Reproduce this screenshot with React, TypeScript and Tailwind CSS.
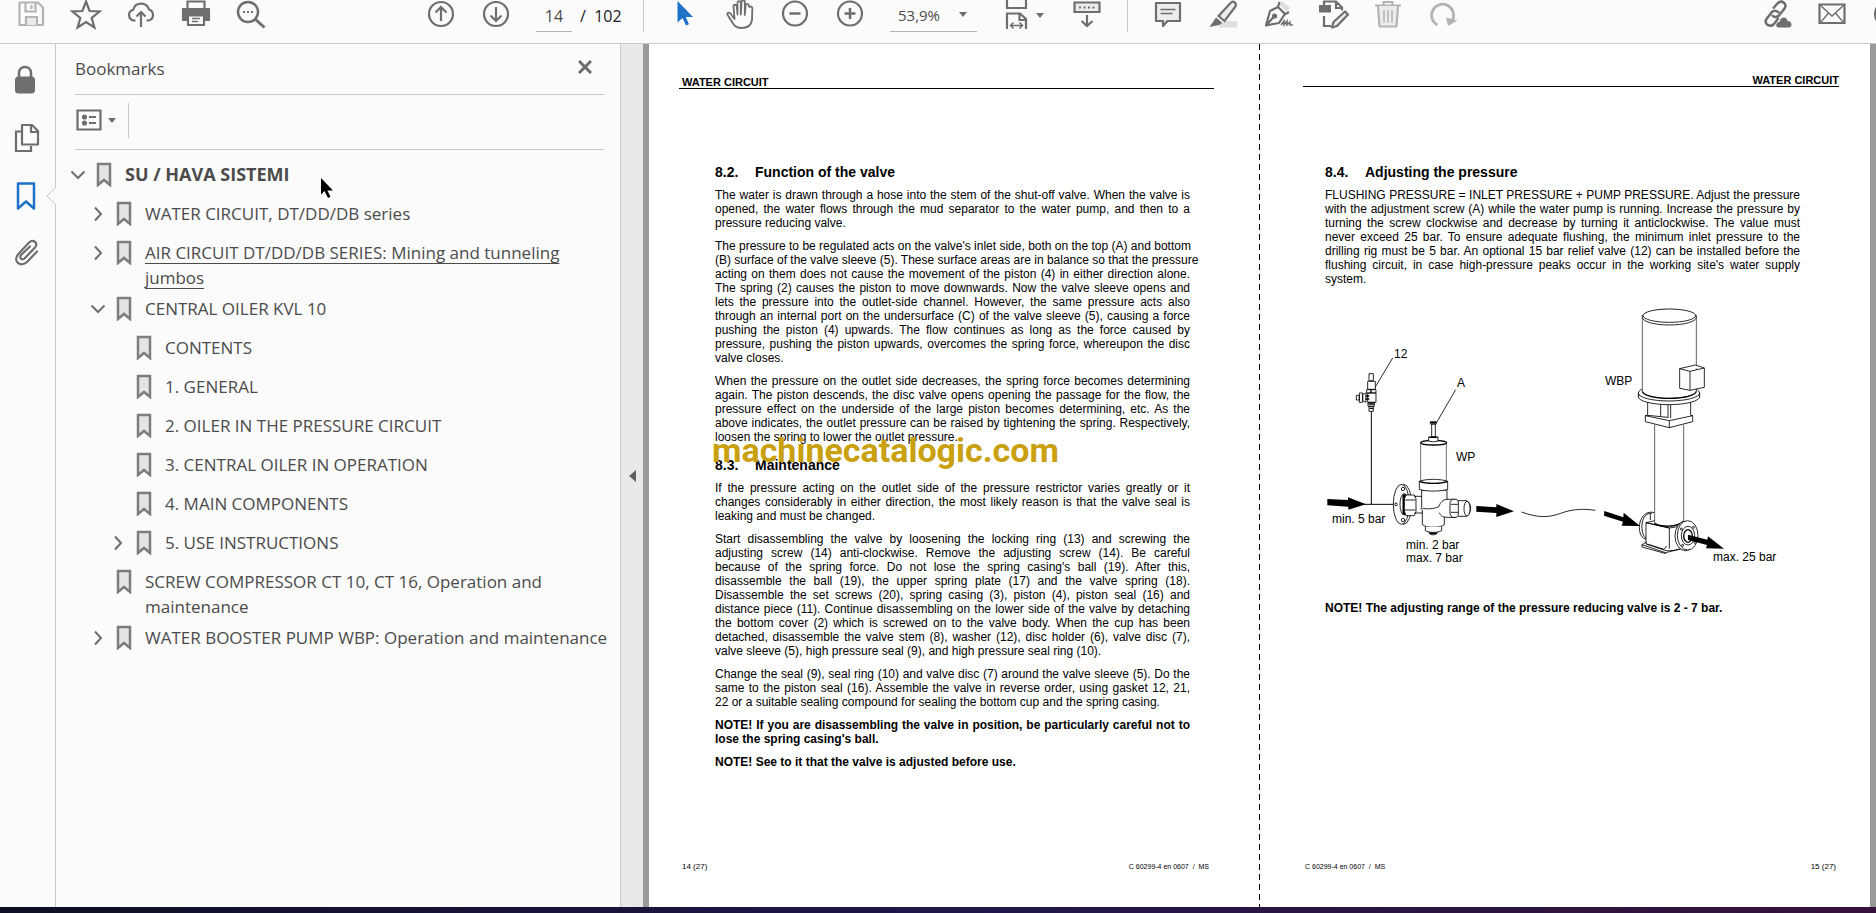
import type { ReactNode } from "react";

type IconProps = { children: ReactNode; tone?: string };

function ToolIcon({ children, tone = "text-[#6e6e6e]" }: IconProps) {
  return (
    <svg
      viewBox="0 0 28 30"
      className={`h-[30px] w-7 overflow-visible ${tone}`}
      fill="none"
      stroke="currentColor"
      strokeWidth="2.200"
      aria-hidden="true"
    >
      {children}
    </svg>
  );
}

const TOOLS: Record<string, ReactNode> = {
  save: (
    <>
      <path d="M2.500 2.500h18.500l5 5v17.500h-23.500z" strokeLinejoin="round" />
      <path d="M8.500 2.500v9h10v-9" />
      <path d="M9 25v-8h11v8" fill="#ececec" />
      <path d="M14.500 5v4" />
    </>
  ),
  star: <path d="M14 1.500 17.600 11l10 .5-7.900 6.500 2.700 9.500L14 22l-8.400 5.500 2.700-9.500-7.900-6.500 10-.5z" />,
  upload: (
    <>
      <path d="M8.500 20.500H7a5.500 5.500 0 0 1-.8-10.800A8.200 8.200 0 0 1 22 9.500a5.700 5.700 0 0 1-.5 11h-2" />
      <path d="M14 27V12.500M9.500 16.500 14 12l4.500 4.500" />
    </>
  ),
  print: (
    <>
      <path d="M5.500 9V1.500h17V9" />
      <path d="M1 9h26v11h-5v-4H6v4H1z" fill="currentColor" strokeLinejoin="round" />
      <path d="M6 15.500h16V25H6z" fill="#fbfbfb" />
      <path d="M10 18.500h8M10 21.500h6" strokeWidth="1.500" />
    </>
  ),
  find: (
    <>
      <circle cx="11" cy="12" r="10" strokeWidth="2.500" />
      <path d="m18.500 19.500 9 8" strokeWidth="3" />
      <path d="M6 12h2M10 12h2M14 12h2" />
    </>
  ),
  up: (
    <>
      <circle cx="14" cy="14" r="12" />
      <path d="M14 21V8M8.500 12.500 14 7l5.500 5.500" />
    </>
  ),
  down: (
    <>
      <circle cx="14" cy="14" r="12" />
      <path d="M14 7v13M8.500 15.500 14 21l5.500-5.500" />
    </>
  ),
  select: <path d="M6.500 1v21.500l5-4.500 3.500 7.500 3-1.300-3.300-7.200H22z" fill="currentColor" stroke="none" />,
  hand: (
    <path
      d="M8.500 19 7.500 6.500c0-2.300 3-2.300 3.300 0l.7 8V3c0-2.500 3.300-2.500 3.300 0v11.500L15.500 2c0-2.300 3.300-2.300 3.300 0v13l.8-9.500c.2-2.300 3.200-2 3.200.3l.7 1.200c.2-1 3 -.5 2.800 1.500L26 20c-.8 5.500-4.500 8-10.500 8-5 0-7-2-8.500-4.500L1.500 14.800c-.9-2 1.500-3 3-1.300z"
      strokeWidth="1.800"
      strokeLinejoin="round"
    />
  ),
  minus: (
    <>
      <circle cx="14" cy="13.500" r="12" />
      <path d="M8.500 13.500h11" strokeWidth="2.500" />
    </>
  ),
  plus: (
    <>
      <circle cx="14" cy="13.500" r="12" />
      <path d="M8.500 13.500h11M14 8v11" strokeWidth="2.500" />
    </>
  ),
  fit: (
    <>
      <path d="M5 0v8h19V0" />
      <path d="M5 29V13.500h13l6 5.500v10" />
      <path d="M17.500 14v6h6" />
      <path d="M9 25.500h11M11.500 22.500l-3 3 3 3M17.500 22.500l3 3-3 3" strokeWidth="1.500" />
    </>
  ),
  keyboard: (
    <>
      <path d="M1.500 2.500h25v9.500h-25z" fill="#ececec" />
      <path d="M6 7.500h2M10.500 7.500h2M15 7.500h2M19.500 7.500h2" strokeWidth="2.200" />
      <path d="M14 15v11M8.500 21l5.500 5 5.500-5" />
    </>
  ),
  comment: (
    <>
      <path d="M2 3h24v18H13.500L9 26v-5H2z" fill="#ececec" strokeLinejoin="round" />
      <path d="M6.500 9.500h15M6.500 13.500h12" strokeWidth="1.500" />
    </>
  ),
  highlight: (
    <>
      <path d="M9 27.500 16 21h12v6.500z" fill="#dedede" stroke="none" />
      <path d="M9.500 16 22 2.500c2.500-2 6 .5 4.500 4L15.500 21z" fill="#ececec" />
      <path d="m7 17.500 6.500 5.500-3 2-3 .5-7 1.500 3.500-5z" fill="currentColor" stroke="none" />
    </>
  ),
  sign: (
    <>
      <path d="m18 1 8.500 7-4 3.500L15 4.500z" fill="#dedede" stroke="none" />
      <path d="M15.500 2 14 7 6 11 2 25.500l13-2.500 5.500-8.500L25 12M14 7l7 7M2.500 25l7-8" strokeLinejoin="round" />
      <circle cx="10.500" cy="16" r="1.500" fill="currentColor" />
      <path d="m17 25 3-4v4l3-4v4l3-3v3h3" strokeWidth="1.500" />
    </>
  ),
  stamp: (
    <>
      <path d="M0 5h12v7.500H0z" fill="currentColor" stroke="none" />
      <path d="M5 5V1.500h12l6 6v3M17 2v6h6" />
      <path d="M5 16v10h7" />
      <path d="m13 27.500 1.500-5.500L26 11.500l3 3-11 11.500z" fill="#ececec" strokeLinejoin="round" />
    </>
  ),
  trash: (
    <>
      <path d="M1 5.500h26M9.500 5V2h9v3" />
      <path d="m4 6 1.500 20.500h17L24 6" fill="#ececec" />
      <path d="M10 10v12.500M14 10v12.500M18 10v12.500" strokeWidth="1.500" />
    </>
  ),
  redo: (
    <>
      <path d="M8.500 25A11 11 0 1 1 23.500 20" strokeWidth="2.800" />
      <path d="m17 17.500 11.500 3-9.500 5.500z" fill="currentColor" stroke="none" />
    </>
  ),
  link: (
    <>
      <path d="m10 8.500 5-5.500c4-3.500 9.500 1 6.500 5.500l-5.500 7c-2.500 2.500-6 1.500-7-.5" strokeWidth="2.500" />
      <path d="m15.500 18-4.500 6c-4 4-10.500 0-7.500-5l5-6.500c2.500-2.500 6-2 7.500.5" strokeWidth="2.500" />
      <path d="M15 27.500c-3-1-2-5.500 1.500-5.500 1-5.500 7-6 8-1 4.500-.5 5.500 6 1.500 6.500z" fill="currentColor" stroke="none" />
    </>
  ),
  mail: (
    <>
      <path d="M1.500 4.500h25v18.500h-25z" />
      <path d="m2 5 12 11L26 5M2 23l8.500-10M26 23l-8.500-10" strokeWidth="1.300" />
    </>
  ),
  profile: <circle cx="14" cy="14" r="12" />,
};

function Tool({ name, label, tone }: { name: string; label: string; tone?: string }) {
  return (
    <button type="button" aria-label={label} className="shrink-0">
      <ToolIcon tone={tone}>{TOOLS[name]}</ToolIcon>
    </button>
  );
}

function Caret() {
  return (
    <svg viewBox="0 0 8 5" className="h-[5px] w-2 text-[#6e6e6e]" fill="currentColor" aria-hidden="true">
      <path d="M0 0h8L4 5z" />
    </svg>
  );
}

function Toolbar() {
  return (
    <header className="flex h-11 shrink-0 items-start overflow-hidden border-b border-[#c8c8c8] bg-[#fbfbfb] text-[#4b4b4b]">
      <div className="flex gap-[27px] pl-[17px]">
        <Tool name="save" label="Save" tone="text-[#b4b4b4]" />
        <Tool name="star" label="Star" />
        <Tool name="upload" label="Upload" />
        <Tool name="print" label="Print" />
        <Tool name="find" label="Find" />
      </div>

      <div className="ml-[162px] flex gap-[27px]">
        <Tool name="up" label="Previous page" />
        <Tool name="down" label="Next page" />
      </div>
      <label className="ml-[26px] flex h-8 shrink-0 items-center gap-2 text-base">
        <input
          aria-label="Page number"
          defaultValue="14"
          className="h-8 w-9 border-b border-[#b4b4b4] bg-transparent text-center outline-none"
        />
        <span className="w-[63px] whitespace-pre text-[#222]">/  102</span>
      </label>
      <div className="h-8 w-px bg-[#c8c8c8]" />

      <div className="ml-[27px] flex gap-[27px]">
        <Tool name="select" label="Select" tone="text-[#1e73c8]" />
        <Tool name="hand" label="Pan" />
        <Tool name="minus" label="Zoom out" />
        <Tool name="plus" label="Zoom in" />
      </div>
      <div className="relative ml-[26px] h-8 w-[87px] shrink-0 border-b border-[#b4b4b4]">
        <select aria-label="Zoom level" className="h-[30px] w-full appearance-none bg-transparent pl-2 text-[15px]">
          <option>53,9%</option>
        </select>
        <span className="pointer-events-none absolute top-3 right-[10px]">
          <Caret />
        </span>
      </div>
      <div className="ml-[25px] flex items-center gap-[6px]">
        <Tool name="fit" label="Fit to width" />
        <Caret />
      </div>
      <div className="ml-[29px] flex">
        <Tool name="keyboard" label="Hide toolbar" />
      </div>
      <div className="ml-[26px] h-8 w-px bg-[#c8c8c8]" />

      <div className="ml-[26px] flex gap-[27px]">
        <Tool name="comment" label="Comment" />
        <Tool name="highlight" label="Highlight" />
        <Tool name="sign" label="Sign" />
        <Tool name="stamp" label="Edit" />
        <Tool name="trash" label="Delete" tone="text-[#b4b4b4]" />
        <Tool name="redo" label="Rotate" tone="text-[#b4b4b4]" />
      </div>
      <div className="mr-[-25px] ml-auto flex gap-[27px]">
        <Tool name="link" label="Share link" />
        <Tool name="mail" label="Send by mail" />
        <Tool name="profile" label="Account" />
      </div>
    </header>
  );
}

function Rail() {
  const button = "flex h-[58px] w-[52px] items-center justify-center text-[#6e6e6e]";
  return (
    <nav className="w-[55px] shrink-0 pt-[7px]">
      <button type="button" aria-label="Security" className={button}>
        <svg viewBox="0 0 28 30" className="h-[30px] w-7" fill="none" stroke="currentColor">
          <path d="M7 12V8c0-8 12-8 12 0v4" strokeWidth="2.500" />
          <rect x="3" y="11.500" width="20" height="17" rx="3.500" fill="currentColor" stroke="none" />
        </svg>
      </button>
      <button type="button" aria-label="Page thumbnails" className={button}>
        <svg viewBox="0 0 28 30" className="h-[30px] w-7" fill="none" stroke="currentColor" strokeWidth="2.200">
          <path d="M9 8.500H4V28h15v-5" />
          <path d="M10 2h10l6 6v13.500H10z" strokeLinejoin="round" />
          <path d="M19 2.500V9h6.500" />
        </svg>
      </button>
      <button type="button" aria-label="Bookmarks" className={`${button} text-[#1e73c8]!`}>
        <svg viewBox="0 0 28 30" className="h-[30px] w-7" fill="none" stroke="currentColor" strokeWidth="2.500">
          <path d="M6 2.500h16v25l-8-7-8 7z" strokeLinejoin="round" />
        </svg>
      </button>
      <button type="button" aria-label="Attachments" className={button}>
        <svg viewBox="0 0 28 30" className="h-[30px] w-7" fill="none" stroke="currentColor" strokeWidth="2.200" strokeLinecap="round">
          <path d="m25 12.500-10 10.500c-6.500 6-14.500-1-9-7.500L17 3.500c4.500-4 9.500.5 6 5L12.500 19.500c-2.500 2-5.500-.5-3.500-3.500L18 7.500" />
        </svg>
      </button>
    </nav>
  );
}

type Item = { title: string; depth: 0 | 1 | 2; state?: "open" | "closed"; current?: boolean };

const BOOKMARKS: Item[] = [
  { title: "SU / HAVA SISTEMI", depth: 0, state: "open" },
  { title: "WATER CIRCUIT, DT/DD/DB series", depth: 1, state: "closed" },
  { title: "AIR CIRCUIT DT/DD/DB SERIES: Mining and tunneling jumbos", depth: 1, state: "closed", current: true },
  { title: "CENTRAL OILER KVL 10", depth: 1, state: "open" },
  { title: "CONTENTS", depth: 2 },
  { title: "1. GENERAL", depth: 2 },
  { title: "2. OILER IN THE PRESSURE CIRCUIT", depth: 2 },
  { title: "3. CENTRAL OILER IN OPERATION", depth: 2 },
  { title: "4. MAIN COMPONENTS", depth: 2 },
  { title: "5. USE INSTRUCTIONS", depth: 2, state: "closed" },
  { title: "SCREW COMPRESSOR CT 10, CT 16, Operation and maintenance", depth: 1 },
  { title: "WATER BOOSTER PUMP WBP: Operation and maintenance", depth: 1, state: "closed" },
];

const INDENT = ["pl-[14px]", "pl-[34px]", "pl-[54px]"];

function BookmarkRow({ item }: { item: Item }) {
  return (
    <li className={`flex min-h-[39px] py-[3px] ${INDENT[item.depth]}`}>
      <span className="flex h-[25px] w-4 shrink-0 items-center justify-center">
        {item.state && (
          <button type="button" aria-label={item.state === "open" ? "Collapse" : "Expand"}>
            <svg viewBox="0 0 16 16" className="size-4" fill="none" stroke="#6e6e6e" strokeWidth="2">
              <path d={item.state === "open" ? "M1.500 4.500 8 11l6.500-6.500" : "m5 1.500 6 6.500-6 6.500"} />
            </svg>
          </button>
        )}
      </span>
      <svg viewBox="0 0 16 25" className="ml-[10px] h-[25px] w-4 shrink-0" fill="#e4e4e4" stroke="#7d7d7d" strokeWidth="2.500">
        <path d="M2 2h12v21l-6-5-6 5z" />
      </svg>
      <a
        href="#"
        className={`ml-[13px] min-w-0 flex-1 pr-2 leading-[25px] ${item.depth === 0 ? "text-[18px] font-bold" : ""} ${item.current ? "underline underline-offset-4" : ""}`}
      >
        {item.title}
      </a>
    </li>
  );
}

function BookmarksPanel() {
  return (
    <aside className="relative w-[565px] shrink-0 border-l border-[#c8c8c8] text-[17px] text-[#4b4b4b]">
      <svg viewBox="0 0 10 18" className="absolute top-[143px] -left-[10px] h-[18px] w-[10px]" fill="#fbfbfb" stroke="#c8c8c8">
        <path d="M10 0 1 9l9 9" />
      </svg>
      <div className="mr-4 ml-[19px]">
        <div className="flex h-[51px] items-center justify-between border-b border-[#c8c8c8]">
          <h2>Bookmarks</h2>
          <button type="button" aria-label="Close" className="mr-3 mb-1">
            <svg viewBox="0 0 14 14" className="size-[14px]" stroke="#6e6e6e" strokeWidth="3">
              <path d="m1 1 12 12M13 1 1 13" />
            </svg>
          </button>
        </div>
        <div className="flex h-[55px] items-center border-b border-[#c8c8c8] pb-1">
          <button type="button" aria-label="Options" className="flex items-center gap-[6px] pl-px">
            <svg viewBox="0 0 26 22" className="h-[22px] w-[26px]" fill="none" stroke="#6e6e6e" strokeWidth="2.200">
              <path d="M1.500 1.500h23v19h-23z" />
              <path d="M13 8h7M13 14h7" />
              <circle cx="8.500" cy="8" r="1.500" fill="#6e6e6e" />
              <circle cx="8.500" cy="14" r="1.500" fill="#6e6e6e" />
            </svg>
            <Caret />
          </button>
          <div className="ml-3 h-[35px] w-px bg-[#c8c8c8]" />
        </div>
      </div>
      <ul className="pt-[9px]">
        {BOOKMARKS.map((item) => (
          <BookmarkRow key={item.title} item={item} />
        ))}
      </ul>
      <svg viewBox="0 0 12 20" className="absolute top-[134px] left-[265px] h-5 w-3">
        <path d="M0 0v16.500l3.500-3.500 3.500 7 2.500-1.200-3.200-6.300H12z" fill="#000" />
      </svg>
    </aside>
  );
}

// Line breaks are those of the printed manual
function Lines({ lines, bold }: { lines: string[]; bold?: boolean }) {
  return (
    <p className={`mb-[9px] text-[12px] leading-[14px] ${bold ? "font-bold" : ""}`}>
      {lines.map((line, i) => (
        <span
          key={line}
          className={`block whitespace-nowrap ${i < lines.length - 1 ? "text-justify [text-align-last:justify]" : ""}`}
        >
          {line}
        </span>
      ))}
    </p>
  );
}

function Heading({ no, title }: { no: string; title: string }) {
  return (
    <h3 className="mb-[7px] flex text-[14px] leading-[18px] font-bold">
      <span className="w-10">{no}</span>
      {title}
    </h3>
  );
}

function LeftPage() {
  return (
    <article className="flex min-w-0 flex-1 flex-col">
      <div className="mt-8 mr-[45px] ml-[30px] border-b border-black pl-[3px] text-[11px] leading-[12px] font-bold">
        WATER CIRCUIT
      </div>
      <div className="mt-[74px] mr-[69px] ml-[66px]">
        <Heading no="8.2." title="Function of the valve" />
        <Lines
          lines={[
            "The water is drawn through a hose into the stem of the shut-off valve. When the valve is",
            "opened, the water flows through the mud separator to the water pump, and then to a",
            "pressure reducing valve.",
          ]}
        />
        <Lines
          lines={[
            "The pressure to be regulated acts on the valve's inlet side, both on the top (A) and bottom",
            "(B) surface of the valve sleeve (5). These surface areas are in balance so that the pressure",
            "acting on them does not cause the movement of the piston (4) in either direction alone.",
            "The spring (2) causes the piston to move downwards. Now the valve sleeve opens and",
            "lets the pressure into the outlet-side channel. However, the same pressure acts also",
            "through an internal port on the undersurface (C) of the valve sleeve (5), causing a force",
            "pushing the piston (4) upwards. The flow continues as long as the force caused by",
            "pressure, pushing the piston upwards, overcomes the spring force, whereupon the disc",
            "valve closes.",
          ]}
        />
        <Lines
          lines={[
            "When the pressure on the outlet side decreases, the spring force becomes determining",
            "again. The piston descends, the disc valve opens opening the passage for the flow, the",
            "pressure effect on the underside of the large piston becomes determining, etc. As the",
            "above indicates, the outlet pressure can be raised by tightening the spring. Respectively,",
            "loosen the spring to lower the outlet pressure.",
          ]}
        />
        <div className="relative pt-[3px]">
          <Heading no="8.3." title="Maintenance" />
          <div className="absolute -top-[23px] -left-[3px] font-[Roboto] text-[34px] leading-[40px] font-bold text-[#c9a00f]">
            machinecatalogic.com
          </div>
        </div>
        <Lines
          lines={[
            "If the pressure acting on the outlet side of the pressure restrictor varies greatly or it",
            "changes considerably in either direction, the most likely reason is that the valve seal is",
            "leaking and must be changed.",
          ]}
        />
        <Lines
          lines={[
            "Start disassembling the valve by loosening the locking ring (13) and screwing the",
            "adjusting screw (14) anti-clockwise. Remove the adjusting screw (14). Be careful",
            "because of the spring force. Do not lose the spring casing's ball (19). After this,",
            "disassemble the ball (19), the upper spring plate (17) and the valve spring (18).",
            "Disassemble the set screws (20), spring casing (3), piston (4), piston seal (16) and",
            "distance piece (11). Continue disassembling on the lower side of the valve by detaching",
            "the bottom cover (2) which is screwed on to the valve body. When the cup has been",
            "detached, disassemble the valve stem (8), washer (12), disc holder (6), valve disc (7),",
            "valve sleeve (5), high pressure seal (9), and high pressure seal ring (10).",
          ]}
        />
        <Lines
          lines={[
            "Change the seal (9), seal ring (10) and valve disc (7) around the valve sleeve (5). Do the",
            "same to the piston seal (16). Assemble the valve in reverse order, using gasket 12, 21,",
            "22 or a suitable sealing compound for sealing the bottom cup and the spring casing.",
          ]}
        />
        <Lines
          bold
          lines={[
            "NOTE! If you are disassembling the valve in position, be particularly careful not to",
            "lose the spring casing's ball.",
          ]}
        />
        <Lines bold lines={["NOTE! See to it that the valve is adjusted before use."]} />
      </div>
      <footer className="mt-auto mr-[50px] mb-[35px] ml-[33px] flex justify-between text-[8px] leading-[10px]">
        <span>14 (27)</span>
        <span className="text-[7px] whitespace-pre">C 60299-4 en 0607  /  MS</span>
      </footer>
    </article>
  );
}

function Diagram() {
  return (
    <svg viewBox="1325 296 475 290" className="block h-auto w-full overflow-visible" role="img" aria-label="Water circuit">
      <g transform="translate(1300 290) scale(.33333)" fill="#fff" stroke="#000" strokeWidth="2.500" strokeLinejoin="round">
        <path d="M278 204 218 304M467 299 409 399" />
        <path d="M214 365V643M190 643H282" strokeWidth="3" />
        {/* relief valve */}
        <path d="M207 251h13v21h-13zM203 274h23v24h-23zM200 299h28v10h-28zM203 309h25v28h-25zM204 337h19v12h-19zM207 349h13v15h-13z" />
        <path d="M169 316h9v14h-9zM178 309h10v28h-10zM188 313l10-4v28l-10-5z" />
        <path d="M196 318h12M196 327h12M205 342h17M213 299v10M209 355h10" strokeWidth="4" />
        {/* inlet flange */}
        <ellipse cx="311" cy="643" rx="24" ry="60" />
        <ellipse cx="304" cy="643" rx="24" ry="60" />
        <circle cx="309" cy="597" r="5" />
        <circle cx="309" cy="690" r="5" />
        <circle cx="288" cy="643" r="4" />
        <ellipse cx="313" cy="643" rx="13" ry="32" />
        <path d="M310 613v60M315 613v62" strokeWidth="5" />
        <path d="M318 615h25l5 12v38l-5 12h-25l-5-14v-36zM314 630h32M314 660h32M343 619h25v50h-25" />
        {/* body */}
        <path d="M365 600v52c-6 3 1 6 2 10v42c10 10 56 10 66 0v-22l8-3V600z" />
        <path d="M376 710v12c12 7 36 7 49 0v-12M386 727c6 10 20 10 28 0" />
        <path d="M388 730h23" strokeWidth="5" />
        <path d="M367 655c22 4 44-1 50-6 4-12 12-20 24-21h25v54h-25c-14 0-20-6-23-14" />
        <path d="M456 628h14l5 8v38l-5 8h-14l-6-10v-34zM452 643h22M452 667h22M474 632h26c16 7 16 38 0 47h-26" />
        <ellipse cx="501" cy="656" rx="9" ry="22" />
        {/* spring casing */}
        <path d="M362 460h77v112h-77z" stroke="#555" />
        <path d="M358 574c20-8 64-8 85 0v24c-20 7-65 7-85 0z" />
        <path d="M358 574c20 8 65 8 85 0" strokeWidth="4" />
        <ellipse cx="401" cy="458" rx="39" ry="7" strokeWidth="4" />
        <path d="M386 441h28v12c-8 3-20 3-28 0zM395 402h11v38h-11zM391 395h18v7h-18z" />
        <path d="M392 398h16M388 442h24" strokeWidth="4" />
        {/* flow */}
        <path d="M664 666c48 17 80 18 118 4s70-14 104-9" fill="none" />
        <path d="M82 627l62 3v-8l54 21-53 16v-9l-63-4zM529 648l60 4v-10l53 22-53 17v-12l-60-4z" fill="#000" stroke="none" />
      </g>
      <g transform="translate(1560 290) scale(.33333)" fill="#fff" stroke="#000" strokeWidth="2.500" strokeLinejoin="round">
        {/* lower casing */}
        <path d="M284 668c-30-9-46 20-46 44s12 40 28 34M276 670c-24-2-32 24-30 46s10 30 16 28" />
        <path d="M284 404V702c20 10 66 10 87-4V404" stroke="#444" />
        <path d="M258 698l26-6M258 698v64l60 20c30 2 50-8 60-16v-60l-50 8zM328 714v62M258 698l70 16M271 672v18" />
        <path d="M284 700c20 12 66 12 87-6" strokeWidth="4" fill="none" />
        <path d="M246 764l70 24 60-14M246 764v7l72 20M246 764l14-8M262 762l50 16 8-10" fill="none" />
        <ellipse cx="376" cy="738" rx="31" ry="44" />
        <ellipse cx="383" cy="736" rx="31" ry="44" />
        <ellipse cx="384" cy="737" rx="20" ry="28" />
        <ellipse cx="384" cy="738" rx="13" ry="19" strokeWidth="4" />
        <circle cx="364" cy="717" r="3" />
        <circle cx="400" cy="712" r="3" />
        <circle cx="368" cy="766" r="3" />
        <circle cx="405" cy="757" r="3" />
        {/* coupling */}
        <path d="M263 336v40l-7 1v18l72 18 70-18v-18l-6-1v-40z" />
        <path d="M256 377l72 15 70-15M328 392v21M302 344v34M324 344v40M332 344v40M263 376l60 6" fill="none" />
        <ellipse cx="327" cy="320" rx="92" ry="24" />
        <path d="M235 308v12M419 308v12" />
        <ellipse cx="327" cy="309" rx="92" ry="24" />
        {/* motor */}
        <path d="M247 76v228c8 28 154 28 162 0V76z" stroke="#444" />
        <path d="M247 304c8 28 154 28 162 0" strokeWidth="4" fill="none" />
        <ellipse cx="328" cy="82" rx="81" ry="23" />
        <ellipse cx="328" cy="77" rx="79" ry="20" />
        <path d="M359 236l47-11 27 9v58l-43 9-31-6zM359 236l31 8 43-10M390 244v57" />
        <path d="M133 663l57 19 1-14 49 40-55-1 4-12-57-18zM384 734l58 15 2-10 48 37-54-1 3-10-57-15z" fill="#000" stroke="none" />
      </g>
      <g fontSize="12" fill="#000">
        <text x="1394" y="358">12</text>
        <text x="1457" y="387">A</text>
        <text x="1456" y="461">WP</text>
        <text x="1605" y="385">WBP</text>
        <text x="1332" y="523">min. 5 bar</text>
        <text x="1406" y="549">min. 2 bar</text>
        <text x="1406" y="562">max. 7 bar</text>
        <text x="1713" y="561">max. 25 bar</text>
      </g>
    </svg>
  );
}

function RightPage() {
  return (
    <article className="flex min-w-0 flex-1 flex-col">
      <div className="mt-[30px] mr-[31px] ml-[43px] border-b border-black text-right text-[11px] leading-[12px] font-bold">
        WATER CIRCUIT
      </div>
      <div className="mt-[76px] mr-[70px] ml-[65px]">
        <Heading no="8.4." title="Adjusting the pressure" />
        <Lines
          lines={[
            "FLUSHING PRESSURE = INLET PRESSURE + PUMP PRESSURE. Adjust the pressure",
            "with the adjustment screw (A) while the water pump is running. Increase the pressure by",
            "turning the screw clockwise and decrease by turning it anticlockwise. The value must",
            "never exceed 25 bar. To ensure adequate flushing, the minimum inlet pressure to the",
            "drilling rig must be 5 bar. An optional 15 bar relief valve (12) can be installed before the",
            "flushing circuit, in case high-pressure peaks occur in the working site's water supply",
            "system.",
          ]}
        />
        <div className="pt-px pb-[15px]">
          <Diagram />
        </div>
        <Lines bold lines={["NOTE! The adjusting range of the pressure reducing valve is 2 - 7 bar."]} />
      </div>
      <footer className="mt-auto mr-[34px] mb-[35px] ml-[45px] flex justify-between text-[8px] leading-[10px]">
        <span className="text-[7px] whitespace-pre">C 60299-4 en 0607  /  MS</span>
        <span>15 (27)</span>
      </footer>
    </article>
  );
}

export default function App() {
  return (
    <div className="flex h-screen flex-col overflow-hidden bg-[#fbfbfb] font-['Open_Sans',sans-serif]">
      <Toolbar />
      <div className="flex min-h-0 flex-1">
        <Rail />
        <BookmarksPanel />
        <button
          type="button"
          aria-label="Collapse panel"
          className="flex w-[23px] shrink-0 items-center justify-center border-l border-[#c8c8c8] bg-[#e9e9e9]"
        >
          <svg viewBox="0 0 7 12" className="h-3 w-[7px]" fill="#5f5f5f">
            <path d="M7 0v12L0 6z" />
          </svg>
        </button>
        <main className="flex min-w-0 flex-1 border-x-[6px] border-[#999] bg-white font-['Liberation_Sans',Arial,sans-serif] text-black">
          <LeftPage />
          <div className="w-px shrink-0 bg-[repeating-linear-gradient(to_bottom,#000_0_6px,#fff_6px_10px)]" />
          <RightPage />
        </main>
      </div>
      <div className="h-[6px] shrink-0 bg-linear-to-r from-[#0c0f24] via-[#20164a] to-[#35123a]" />
    </div>
  );
}
